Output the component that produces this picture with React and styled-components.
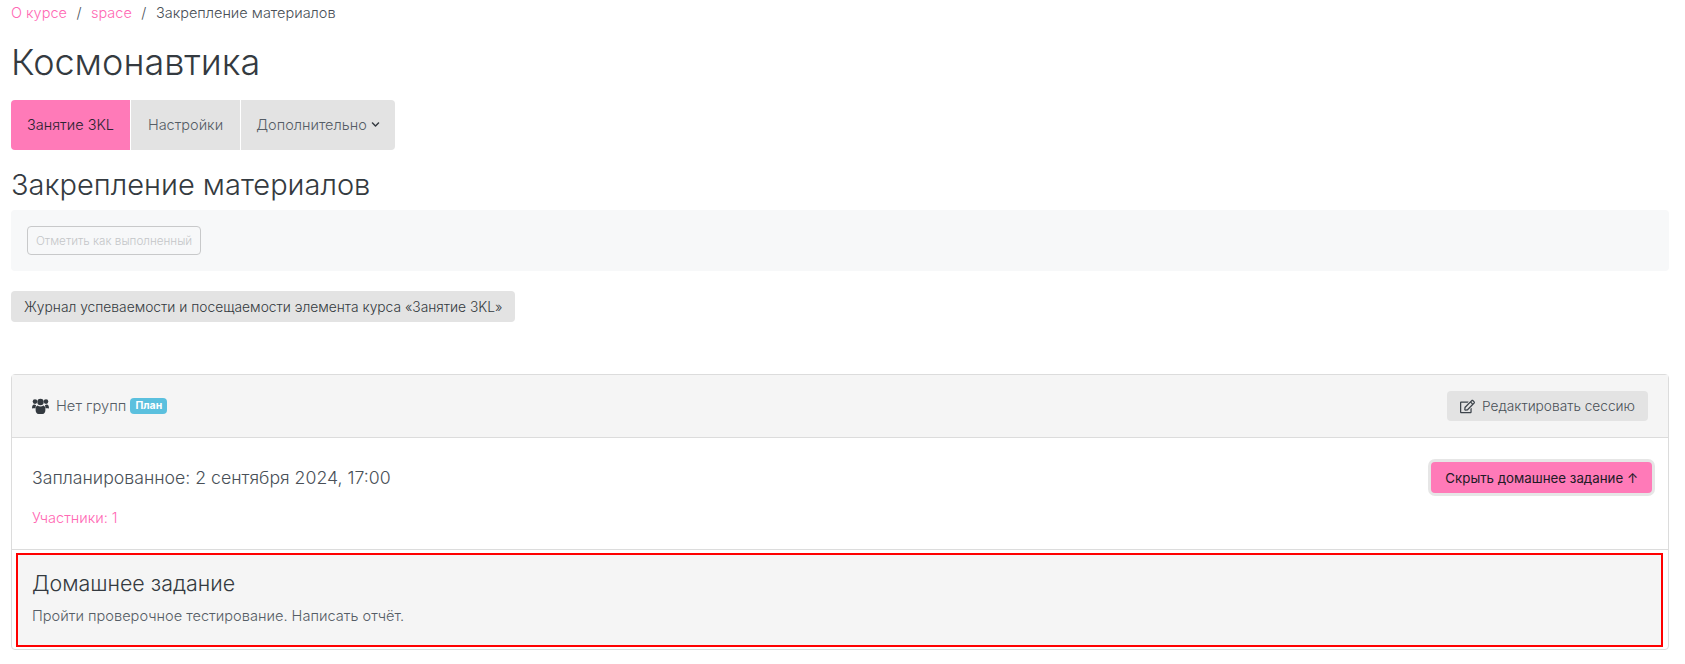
import React from 'react';
import styled, { createGlobalStyle } from 'styled-components';
import { FaRegEdit, FaChevronDown } from 'react-icons/fa';

const Global = createGlobalStyle`
  body {
    margin: 0;
    background: #fff;
    font-family: "Inter", "Noto Sans", sans-serif;
    font-weight: 300;
    font-size: 15px;
    color: #343a40;
  }
`;

const Page = styled.div`
  padding: 0 16px 0 11px;
  height: 664px;
  box-sizing: border-box;
  overflow: hidden;
`;

const Crumbs = styled.div`
  display: flex;
  gap: 9.5px;
  height: 24px;
  align-items: center;
  font-size: 14.5px;
  color: #495057;
`;

const CrumbLink = styled.a`
  color: #ff69b4;
`;

const Title = styled.h1`
  margin: 15px 0 0;
  font-size: 36px;
  line-height: 46px;
  font-weight: 300;
  color: #343a40;
`;

const Tabs = styled.div`
  display: flex;
  gap: 1px;
  margin-top: 15px;
  width: max-content;
  height: 50px;
`;

const Tab = styled.div`
  display: flex;
  align-items: center;
  gap: 4px;
  width: ${p => p.$w}px;
  box-sizing: border-box;
  padding-bottom: 2px;
  justify-content: center;
  background: ${p => (p.$active ? '#ff7ab8' : '#e3e3e3')};
  color: ${p => (p.$active ? '#2b2330' : '#555d66')};
  font-size: 14.5px;
  border-radius: ${p => p.$radius || '0'};
`;

const Subtitle = styled.h2`
  margin: 17px 0 0;
  font-size: 29px;
  line-height: 35px;
  font-weight: 300;
  color: #343a40;
`;

const CompletionBar = styled.div`
  margin-top: 8px;
  height: 61px;
  background: #f7f8f9;
  border-radius: 4px;
  padding: 16px;
  box-sizing: border-box;
`;

const GhostButton = styled.div`
  display: inline-flex;
  align-items: center;
  height: 29px;
  padding: 0 8px;
  box-sizing: border-box;
  border: 1px solid #c8c9ca;
  border-radius: 4px;
  color: #c4c6c8;
  font-size: 11.7px;
`;

const JournalButton = styled.div`
  display: inline-flex;
  align-items: center;
  margin-top: 20px;
  height: 31px;
  padding: 0 13px;
  background: #e3e3e3;
  border-radius: 4px;
  font-size: 13.8px;
  color: #343a40;
`;

const Card = styled.div`
  margin-top: 52px;
  height: 276px;
  box-sizing: border-box;
  border: 1px solid #dcdcdc;
  border-radius: 4px;
  background: #fff;
  display: flex;
  flex-direction: column;
`;

const CardHeader = styled.div`
  height: 63px;
  flex: none;
  box-sizing: border-box;
  background: #f5f5f5;
  border-bottom: 1px solid #dcdcdc;
  display: flex;
  align-items: center;
  justify-content: space-between;
  padding: 0 20px;
  color: #555d66;
`;

const Groups = styled.div`
  display: flex;
  align-items: center;
  gap: 7px;
  font-size: 14.7px;
`;

const UsersIcon = styled.svg`
  width: 17px;
  height: 16px;
  fill: #343a40;
`;

const Badge = styled.span`
  background: #5bc0de;
  color: #fff;
  font-weight: 700;
  font-size: 10.5px;
  padding: 1px 5px 2px;
  border-radius: 4px;
  margin-left: -3px;
`;

const EditButton = styled.div`
  display: flex;
  align-items: center;
  gap: 7px;
  height: 30px;
  padding: 0 13px;
  background: #e3e3e3;
  border-radius: 4px;
  font-size: 13.7px;
  color: #495057;
  svg { font-size: 15px; color: #3d444b; }
`;

const CardBody = styled.div`
  height: 112px;
  flex: none;
  box-sizing: border-box;
  border-bottom: 1px solid #dcdcdc;
  padding: 24px 20px 0;
`;

const BodyRow = styled.div`
  display: flex;
  align-items: center;
  justify-content: space-between;
  height: 31px;
  margin-right: -4px;
`;

const Scheduled = styled.div`
  font-size: 17.7px;
  color: #495057;
`;

const PinkButton = styled.div`
  height: 31px;
  padding: 0 14px;
  display: flex;
  align-items: center;
  box-sizing: border-box;
  background: #ff7ab8;
  border-radius: 4px;
  box-shadow: 0 0 0 3px #e6e6e6;
  font-size: 13.3px;
  font-weight: 400;
  color: #221b26;
`;

const Members = styled.a`
  display: block;
  margin-top: 16px;
  font-size: 14.5px;
  color: #ff69b4;
`;

const Homework = styled.div`
  margin: 3px 5px 2px 4px;
  flex: 1;
  box-sizing: border-box;
  border: 2px solid #f00;
  background: #f5f5f5;
  padding: 13px 14px;
`;

const HomeworkTitle = styled.h4`
  margin: 0;
  font-size: 21.4px;
  line-height: 30px;
  font-weight: 300;
  color: #343a40;
`;

const HomeworkText = styled.p`
  margin: 9px 0 0;
  font-size: 14.6px;
  color: #555d66;
`;

export default function App() {
  return (
    <Page>
      <Global />
      <Crumbs>
        <CrumbLink>О курсе</CrumbLink>
        <span>/</span>
        <CrumbLink>space</CrumbLink>
        <span>/</span>
        <span>Закрепление материалов</span>
      </Crumbs>
      <Title>Космонавтика</Title>
      <Tabs>
        <Tab $active $w={119} $radius="4px 0 0 4px">Занятие 3KL</Tab>
        <Tab $w={109}>Настройки</Tab>
        <Tab $w={154} $radius="0 4px 4px 0">
          Дополнительно <FaChevronDown size={9} color="#343a40" />
        </Tab>
      </Tabs>
      <Subtitle>Закрепление материалов</Subtitle>
      <CompletionBar>
        <GhostButton>Отметить как выполненный</GhostButton>
      </CompletionBar>
      <JournalButton>Журнал успеваемости и посещаемости элемента курса «Занятие 3KL»</JournalButton>
      <Card>
        <CardHeader>
          <Groups>
            <UsersIcon viewBox="0 0 17 16">
              <circle cx="3" cy="3.6" r="2.3" />
              <circle cx="14" cy="3.6" r="2.3" />
              <circle cx="8.5" cy="4" r="3.2" />
              <path d="M0 10.5C0 8 .8 6.6 2.2 6.6c.6 0 1.2.3 1.9.6-.4.8-.5 1.8-.5 3H1.2C.5 10.2 0 10.5 0 10.5z" />
              <path d="M17 10.5c0-2.5-.8-3.9-2.2-3.9-.6 0-1.2.3-1.9.6.4.8.5 1.8.5 3h2.4c.7 0 1.2.3 1.2.3z" />
              <path d="M5.6 7.6c.8.6 1.8 1 2.9 1s2.1-.4 2.9-1c1.3.2 2 1.7 2 4.2 0 2.5-1 4.2-3 4.2H6.6c-2 0-3-1.7-3-4.2 0-2.5.7-4 2-4.2z" />
            </UsersIcon>
            Нет групп
            <Badge>План</Badge>
          </Groups>
          <EditButton>
            <FaRegEdit />
            Редактировать сессию
          </EditButton>
        </CardHeader>
        <CardBody>
          <BodyRow>
            <Scheduled>Запланированное: 2 сентября 2024, 17:00</Scheduled>
            <PinkButton>Скрыть домашнее задание ↑</PinkButton>
          </BodyRow>
          <Members>Участники: 1</Members>
        </CardBody>
        <Homework>
          <HomeworkTitle>Домашнее задание</HomeworkTitle>
          <HomeworkText>Пройти проверочное тестирование. Написать отчёт.</HomeworkText>
        </Homework>
      </Card>
    </Page>
  );
}
